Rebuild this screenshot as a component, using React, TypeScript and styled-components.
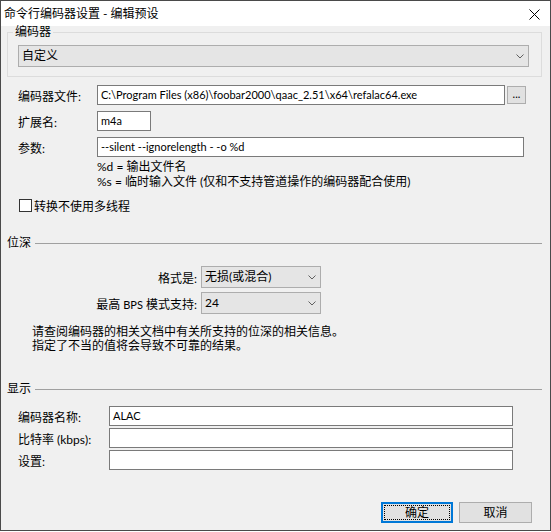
import * as React from "react";
import styled, { createGlobalStyle } from "styled-components";

const GlobalStyle = createGlobalStyle`
  html, body {
    margin: 0;
    padding: 0;
    background: #ffffff;
  }
  body {
    font-family: "Lato", "Noto Sans CJK SC", sans-serif;
    font-size: 12px;
    color: #000;
  }
`;

const Chevron = () => (
  <svg width="8" height="5" viewBox="0 0 8 5">
    <path d="M0.5 0.5 L4 4 L7.5 0.5" fill="none" stroke="#606060" strokeWidth="1" />
  </svg>
);

const CloseIcon = () => (
  <svg width="11" height="11" viewBox="0 0 11 11">
    <path d="M0.5 0.5 L10.5 10.5 M10.5 0.5 L0.5 10.5" stroke="#000" strokeWidth="1" />
  </svg>
);

const Combo: React.FC<{ value: string; width: number }> = ({ value, width }) => (
  <ComboBox style={{ width }}>
    <ComboValue>{value}</ComboValue>
    <ComboArrow>
      <Chevron />
    </ComboArrow>
  </ComboBox>
);

export default function App() {
  return (
    <>
      <GlobalStyle />
      <Window>
        <TitleBar>
          <Title>命令行编码器设置 - 编辑预设</Title>
          <CloseButton>
            <CloseIcon />
          </CloseButton>
        </TitleBar>

        <Body>
          <Group>
            <Legend>编码器</Legend>
            <Combo value="自定义" width={511} />
          </Group>

          <Rows $top={8} $gap={6}>
            <Row>
              <Label $width={79}>编码器文件:</Label>
              <TextBox $width={408}>C:\Program Files (x86)\foobar2000\qaac_2.51\x64\refalac64.exe</TextBox>
              <BrowseButton>...</BrowseButton>
            </Row>
            <Row>
              <Label $width={79}>扩展名:</Label>
              <TextBox $width={54}>m4a</TextBox>
            </Row>
            <Row>
              <Label $width={79}>参数:</Label>
              <TextBox $width={427}>--silent --ignorelength - -o %d</TextBox>
            </Row>
          </Rows>

          <Hint>
            <div>%d = 输出文件名</div>
            <div>%s = 临时输入文件 (仅和不支持管道操作的编码器配合使用)</div>
          </Hint>

          <CheckRow>
            <CheckBox />
            <span>转换不使用多线程</span>
          </CheckRow>

          <Separator $top={23}>
            <span>位深</span>
            <Line />
          </Separator>

          <Rows $top={16} $gap={4}>
            <Row>
              <RightLabel>格式是:</RightLabel>
              <Combo value="无损(或混合)" width={120} />
            </Row>
            <Row>
              <RightLabel>
                最高 <Small>BPS</Small> 模式支持:
              </RightLabel>
              <Combo value="24" width={120} />
            </Row>
          </Rows>

          <Info>
            <div>请查阅编码器的相关文档中有关所支持的位深的相关信息。</div>
            <div>指定了不当的值将会导致不可靠的结果。</div>
          </Info>

          <Separator $top={29}>
            <span>显示</span>
            <Line />
          </Separator>

          <Rows $top={10} $gap={2}>
            <Row>
              <Label $width={91}>编码器名称:</Label>
              <TextBox $width={404}>ALAC</TextBox>
            </Row>
            <Row>
              <Label $width={91}>比特率 (kbps):</Label>
              <TextBox $width={404} />
            </Row>
            <Row>
              <Label $width={91}>设置:</Label>
              <TextBox $width={404} />
            </Row>
          </Rows>

          <ButtonRow>
            <Button $default>确定</Button>
            <Button>取消</Button>
          </ButtonRow>
        </Body>
      </Window>
    </>
  );
}

const Window = styled.div`
  width: 551px;
  height: 531px;
  box-sizing: border-box;
  border: 1px solid #4a4a4a;
  background: #f0f0f0;
  display: flex;
  flex-direction: column;
  overflow: hidden;
`;

const TitleBar = styled.div`
  height: 25px;
  flex: none;
  background: #ffffff;
  display: flex;
  align-items: center;
  justify-content: space-between;
  padding: 0 10px 0 3px;
`;

const Title = styled.div`
  font-size: 12px;
  line-height: 14px;
`;

const CloseButton = styled.div`
  display: flex;
  align-items: center;
  margin-top: 1px;
`;

const Body = styled.div`
  flex: 1;
  display: flex;
  flex-direction: column;
  padding: 0 8px 7px 6px;
`;

const Group = styled.fieldset`
  margin: 0;
  padding: 7px 11px 9px 10px;
  border: 1px solid #dcdcdc;
  min-width: 0;
`;

const Legend = styled.legend`
  padding: 0 2px;
  margin-left: -5px;
  font-size: 12px;
  line-height: 12px;
`;

const ComboBox = styled.div`
  height: 22px;
  box-sizing: border-box;
  border: 1px solid #adadad;
  background: #e5e5e5;
  display: flex;
  align-items: center;
`;

const ComboValue = styled.div`
  flex: 1;
  padding-left: 3px;
  line-height: 14px;
  white-space: nowrap;
`;

const ComboArrow = styled.div`
  width: 17px;
  display: flex;
  align-items: center;
  justify-content: center;
`;

const Rows = styled.div<{ $top: number; $gap: number }>`
  display: flex;
  flex-direction: column;
  gap: ${(p) => p.$gap}px;
  margin-top: ${(p) => p.$top}px;
`;

const Row = styled.div`
  display: flex;
  align-items: center;
`;

const Label = styled.div<{ $width: number }>`
  width: ${(p) => p.$width}px;
  padding-left: 11px;
  white-space: nowrap;
`;

const RightLabel = styled.div`
  width: 190px;
  padding-right: 4px;
  text-align: right;
  white-space: nowrap;
`;

const Small = styled.span`
  font-size: 11px;
`;

const TextBox = styled.div<{ $width: number }>`
  width: ${(p) => p.$width}px;
  height: 20px;
  box-sizing: border-box;
  border: 1px solid #7a7a7a;
  background: #ffffff;
  padding-left: 3px;
  font-size: 11px;
  line-height: 18px;
  white-space: nowrap;
  overflow: hidden;
`;

const BrowseButton = styled.div`
  width: 19px;
  height: 18px;
  box-sizing: border-box;
  margin-left: 2px;
  border: 1px solid #adadad;
  background: #e1e1e1;
  text-align: center;
  line-height: 13px;
  font-size: 11px;
`;

const Hint = styled.div`
  margin: 2px 0 0 90px;
  line-height: 15px;
`;

const CheckRow = styled.div`
  display: flex;
  align-items: center;
  gap: 2px;
  height: 16px;
  margin: 8px 0 0 12px;
`;

const CheckBox = styled.div`
  width: 13px;
  height: 13px;
  box-sizing: border-box;
  border: 1px solid #333333;
  background: #ffffff;
`;

const Separator = styled.div<{ $top: number }>`
  display: flex;
  align-items: center;
  gap: 4px;
  height: 14px;
  margin-top: ${(p) => p.$top}px;
  line-height: 14px;
`;

const Line = styled.div`
  flex: 1;
  border-top: 1px solid #a0a0a0;
`;

const Info = styled.div`
  margin: 11px 0 0 25px;
  line-height: 14px;
`;

const ButtonRow = styled.div`
  margin-top: auto;
  display: flex;
  justify-content: flex-end;
  gap: 6px;
  padding-right: 10px;
`;

const Button = styled.div<{ $default?: boolean }>`
  position: relative;
  width: ${(p) => (p.$default ? 72 : 73)}px;
  height: 21px;
  box-sizing: border-box;
  border: ${(p) => (p.$default ? "2px solid #0078d7" : "1px solid #adadad")};
  background: #e1e1e1;
  display: flex;
  align-items: center;
  justify-content: center;
  line-height: 14px;

  &::after {
    content: "";
    display: ${(p) => (p.$default ? "block" : "none")};
    position: absolute;
    inset: 1px;
    border: 1px dotted #000;
  }
`;
